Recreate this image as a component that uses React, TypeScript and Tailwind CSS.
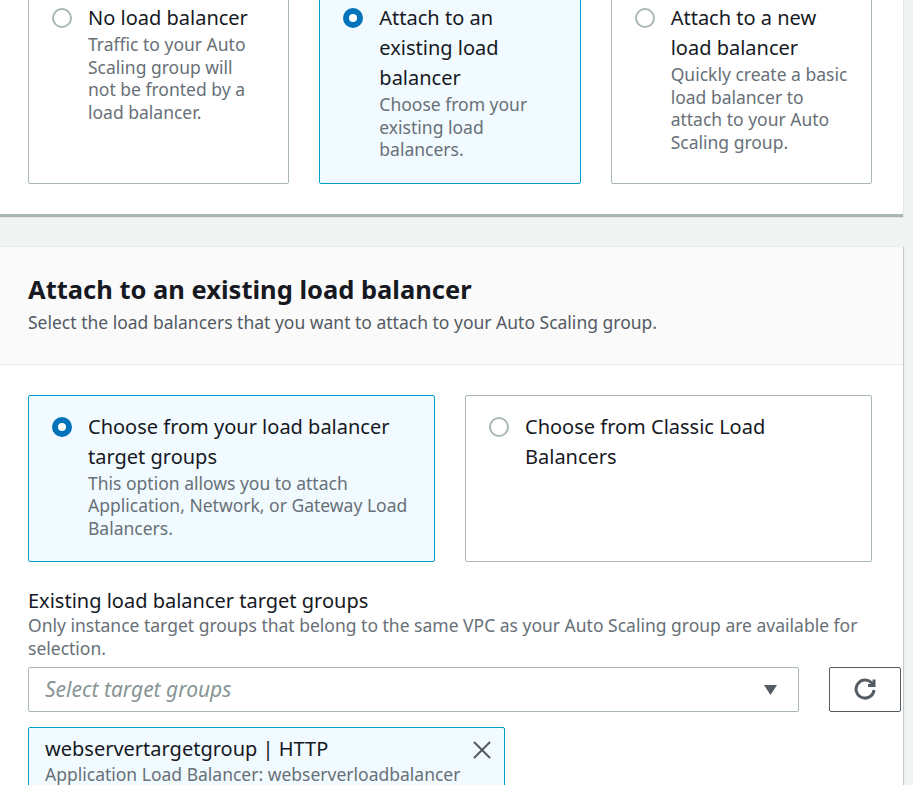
import { X } from 'lucide-react';

type Option = { label: string; desc?: string; checked?: boolean; narrow?: boolean };

const topOptions: Option[] = [
  { label: 'No load balancer', desc: 'Traffic to your Auto Scaling group will not be fronted by a load balancer.', narrow: true },
  { label: 'Attach to an existing load balancer', desc: 'Choose from your existing load balancers.', checked: true },
  { label: 'Attach to a new load balancer', desc: 'Quickly create a basic load balancer to attach to your Auto Scaling group.' },
];

const sourceOptions: Option[] = [
  {
    label: 'Choose from your load balancer target groups',
    desc: 'This option allows you to attach Application, Network, or Gateway Load Balancers.',
    checked: true,
  },
  { label: 'Choose from Classic Load Balancers' },
];

const Radio = ({ checked }: { checked?: boolean }) =>
  checked ? (
    <span className="mt-[5px] flex h-[20px] w-[20px] shrink-0 items-center justify-center rounded-full bg-[#0073bb]">
      <span className="h-[8px] w-[8px] rounded-full bg-white" />
    </span>
  ) : (
    <span className="mt-[5px] h-[20px] w-[20px] shrink-0 rounded-full border-2 border-[#aab7b8] bg-white" />
  );

const Tile = ({ option }: { option: Option }) => (
  <div
    className={`flex gap-[16px] rounded-[2px] border pt-[16px] pb-[22px] pl-[23px] ${option.narrow ? 'pr-[30px]' : 'pr-[16px]'} ${
      option.checked ? 'border-[#00a1c9] bg-[#f1faff]' : 'border-[#aab7b8] bg-white'
    }`}
  >
    <Radio checked={option.checked} />
    <div>
      <div className="text-[20px] leading-[30px] text-[#16191f]">{option.label}</div>
      {option.desc && <div className="text-[17.5px] leading-[22.5px] text-[#687078]">{option.desc}</div>}
    </div>
  </div>
);

const RefreshIcon = () => (
  <svg width="24" height="24" viewBox="0 0 16 16" fill="none" stroke="#545b64" strokeWidth="2" strokeLinejoin="miter">
    <path d="M13.3 4.5A6 6 0 1 0 14 8" />
    <path d="M14 1v4h-4" />
  </svg>
);

const App = () => {
  return (
    <div className="h-[785px] w-[913px] overflow-hidden bg-[#f2f3f3] font-['Noto_Sans',sans-serif]">
      {/* Load balancing options */}
      <div className="-mt-[34px] w-[903px] border-b-2 border-[#aab7b8] bg-white pt-[20px] pb-[30px] pl-[28px] pr-[31px] shadow-[0_1px_1px_rgba(0,28,36,0.3)]">
        <div className="grid grid-cols-3 gap-[30px]">
          {topOptions.map((o) => (
            <Tile key={o.label} option={o} />
          ))}
        </div>
      </div>

      {/* Attach to an existing load balancer */}
      <div className="mt-[30px] w-[903px] border-t border-[#eaeded] bg-white pb-[60px] shadow-[0_1px_1px_rgba(0,28,36,0.3),1px_1px_1px_rgba(0,28,36,0.15)]">
        <div className="border-b border-[#eaeded] bg-[#fafafa] pl-[28px] pr-[31px] pt-[27px] pb-[31px]">
          <h2 className="text-[25.5px] leading-[31px] font-bold text-[#16191f]">Attach to an existing load balancer</h2>
          <p className="mt-[6px] text-[17.5px] leading-[22px] text-[#545b64]">
            Select the load balancers that you want to attach to your Auto Scaling group.
          </p>
        </div>

        <div className="pl-[28px] pr-[31px] pt-[30px]">
          <div className="grid grid-cols-2 gap-[30px]">
            {sourceOptions.map((o) => (
              <Tile key={o.label} option={o} />
            ))}
          </div>

          <div className="mt-[26px] text-[20px] leading-[26px] text-[#16191f]">Existing load balancer target groups</div>
          <div className="text-[17.5px] leading-[23px] text-[#687078]">
            Only instance target groups that belong to the same VPC as your Auto Scaling group are available for selection.
          </div>

          <div className="mt-[7px] flex w-[873px] gap-[30px]">
            <div className="flex h-[45px] flex-1 items-center justify-between rounded-[2px] border border-[#aab7b8] bg-white pl-[16px] pr-[21px]">
              <span className="text-[21px] italic text-[#879596]">Select target groups</span>
              <svg width="13" height="10" viewBox="0 0 13 10">
                <path d="M0 0h13L6.5 10z" fill="#545b64" />
              </svg>
            </div>
            <button className="flex h-[45px] w-[72px] items-center justify-center rounded-[2px] border border-[#545b64] bg-white">
              <RefreshIcon />
            </button>
          </div>

          <div className="mt-[15px] flex w-[477px] items-start justify-between rounded-[2px] border border-[#00a1c9] bg-[#f1faff] pt-[8px] pl-[16px] pr-[7px] pb-[10px]">
            <div>
              <div className="text-[20px] leading-[26px] text-[#16191f]">webservertargetgroup | HTTP</div>
              <div className="text-[17.5px] leading-[24px] text-[#687078]">Application Load Balancer: webserverloadbalancer</div>
            </div>
            <X className="-mt-[1px] h-[30px] w-[30px] text-[#545b64]" strokeWidth={1.6} />
          </div>
        </div>
      </div>
    </div>
  );
};

export default App;
